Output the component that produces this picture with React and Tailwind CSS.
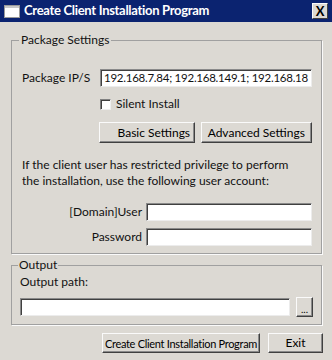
import React from 'react'

const field = 'h-[18px] min-w-0 bg-white border border-[#8a8a8a] border-r-[#ececec] border-b-[#ececec] shadow-[inset_1px_1px_0_#404040]'
const btn = 'bg-[#dcd9d3] border border-[#fafafa] border-r-[#404040] border-b-[#404040] shadow-[inset_-1px_-1px_0_#8a8a8a] text-black leading-none whitespace-nowrap'

export default function App() {
    return (
        <div className="w-[332px] h-[360px] bg-[#dcd9d3] font-['Lato',sans-serif] text-[12px] text-[#111] overflow-hidden">
            {/* title bar */}
            <div className="h-[22px] bg-[#0b2370] flex items-center pl-[4px] pr-[4px]">
                <svg width="16" height="13" viewBox="0 0 16 13">
                    <rect x="0.5" y="0.5" width="15" height="12" fill="#fff" stroke="#9a9a9a" />
                    <rect x="1" y="1" width="14" height="2" fill="#c8c8c8" />
                </svg>
                <span className="ml-[4px] text-white font-bold text-[13px] tracking-[-0.3px] whitespace-nowrap">Create Client Installation Program</span>
                <div className="ml-auto w-[16px] h-[16px] bg-[#dcd9d3] border border-[#fafafa] border-r-[#404040] border-b-[#404040] flex items-center justify-center font-bold text-[13px] text-black leading-none">X</div>
            </div>

            {/* package settings */}
            <fieldset className="min-w-0 w-[311px] ml-[11px] mt-[10px] border border-[#a0a0a0] shadow-[1px_1px_0_#fafafa] pl-[10px] pr-[9px] h-[222px]">
                <legend className="px-[2px] ml-[-3px] leading-[16px]">Package Settings</legend>
                <div className="flex items-center mt-[21px]">
                    <span className="w-[78px] whitespace-nowrap">Package IP/S</span>
                    <div className={`${field} flex-1 flex items-center px-[3px] whitespace-nowrap overflow-hidden text-[11.5px] tracking-[-0.25px]`}>192.168.7.84; 192.168.149.1; 192.168.18</div>
                </div>
                <div className="flex items-center h-[16px] ml-[78px] mt-[9px]">
                    <div className="w-[11px] h-[11px] bg-white border border-[#808080] border-r-[#eee] border-b-[#eee] shadow-[inset_1px_1px_0_#404040]"></div>
                    <span className="ml-[5px]">Silent Install</span>
                </div>
                <div className="flex ml-[77px] mt-[10px] gap-[6px]">
                    <button className={`${btn} h-[21px] w-[96px] pl-[14px]`}>Basic Settings</button>
                    <button className={`${btn} h-[21px] w-[112px]`}>Advanced Settings</button>
                </div>
                <p className="mt-[14px] leading-[16px]">If the client user has restricted privilege to perform<br />the installation, use the following user account:</p>
                <div className="flex items-center mt-[14px]">
                    <span className="w-[124px] text-right pr-[4px] whitespace-nowrap">[Domain]User</span>
                    <div className={`${field} flex-1`}></div>
                </div>
                <div className="flex items-center mt-[7px]">
                    <span className="w-[124px] text-right pr-[4px]">Password</span>
                    <div className={`${field} flex-1`}></div>
                </div>
            </fieldset>

            {/* output */}
            <fieldset className="min-w-0 w-[311px] ml-[11px] mt-[3px] border border-[#a0a0a0] shadow-[1px_1px_0_#fafafa] pl-[8px] pr-[8px] h-[68px]">
                <legend className="px-[1px] ml-[-2px] leading-[16px]">Output</legend>
                <div className="leading-[16px] mt-[1px]">Output path:</div>
                <div className="flex items-center mt-[7px] gap-[6px]">
                    <div className={`${field} flex-1`}></div>
                    <button className={`${btn} w-[17px] h-[20px] text-[10px] pt-[4px]`}>...</button>
                </div>
            </fieldset>

            <div className="flex justify-end gap-[8px] mt-[8px] pr-[9px]">
                <button className={`${btn} h-[20px] w-[158px] text-[11px] tracking-[-0.3px]`}>Create Client Installation Program</button>
                <button className={`${btn} h-[20px] w-[55px]`}>Exit</button>
            </div>
        </div>
    )
}
